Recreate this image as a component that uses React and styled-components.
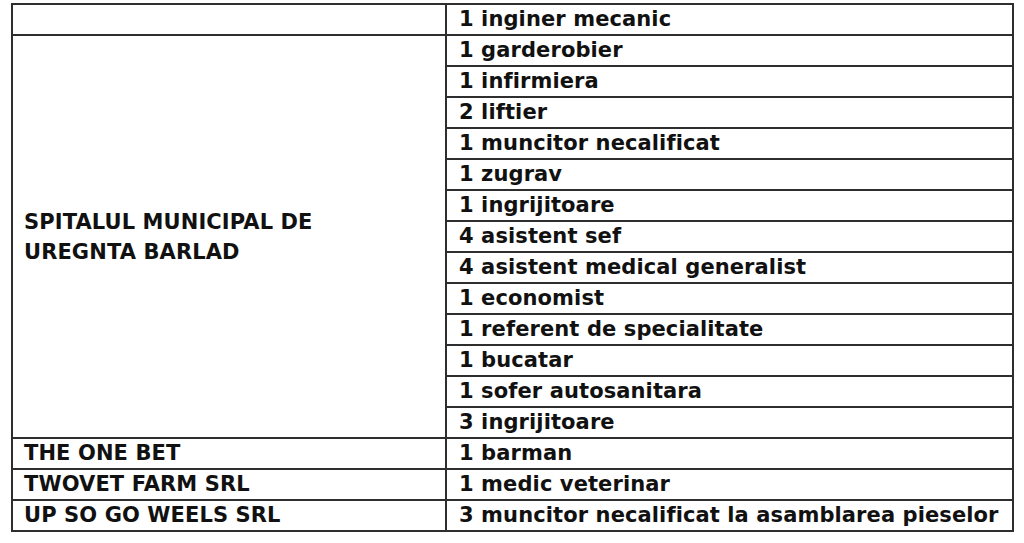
import React from "react";
import styled, { createGlobalStyle } from "styled-components";

const GlobalStyle = createGlobalStyle`
  body {
    margin: 0;
    background: #ffffff;
  }
`;

const Page = styled.div`
  padding: 3px 0 0 11px;
`;

const Table = styled.table`
  border-collapse: collapse;
  width: 1003px;
  table-layout: fixed;
  font-family: "DejaVu Sans", "Verdana", sans-serif;
  font-weight: bold;
  font-size: 21px;
  letter-spacing: 0.1px;
  color: #111;
`;

const Cell = styled.td`
  border: 2px solid #2e2e2e;
  height: 29px;
  padding: 0 0 0 ${(p) => (p.$right ? 12 : 11)}px;
  vertical-align: middle;
  line-height: 29px;
  white-space: nowrap;
`;

const Company = styled.div`
  line-height: 30px;
  white-space: normal;
  width: 340px;
`;

const hospitalJobs = [
  "1 garderobier",
  "1 infirmiera",
  "2 liftier",
  "1 muncitor necalificat",
  "1 zugrav",
  "1 ingrijitoare",
  "4 asistent sef",
  "4 asistent medical generalist",
  "1 economist",
  "1 referent de specialitate",
  "1 bucatar",
  "1 sofer autosanitara",
  "3 ingrijitoare",
];

const others = [
  ["THE ONE BET", "1 barman"],
  ["TWOVET FARM SRL", "1 medic veterinar"],
  ["UP SO GO WEELS SRL", "3 muncitor necalificat la asamblarea pieselor"],
];

export default function App() {
  return (
    <Page>
      <GlobalStyle />
      <Table>
        <colgroup>
          <col style={{ width: 434 }} />
          <col />
        </colgroup>
        <tbody>
          <tr>
            <Cell />
            <Cell $right>1 inginer mecanic</Cell>
          </tr>
          {hospitalJobs.map((job, i) => (
            <tr key={job + i}>
              {i === 0 && (
                <Cell rowSpan={hospitalJobs.length}>
                  <Company>
                    SPITALUL MUNICIPAL DE
                    <br />
                    UREGNTA BARLAD
                  </Company>
                </Cell>
              )}
              <Cell $right>{job}</Cell>
            </tr>
          ))}
          {others.map(([name, job]) => (
            <tr key={name}>
              <Cell>{name}</Cell>
              <Cell $right>{job}</Cell>
            </tr>
          ))}
        </tbody>
      </Table>
    </Page>
  );
}
